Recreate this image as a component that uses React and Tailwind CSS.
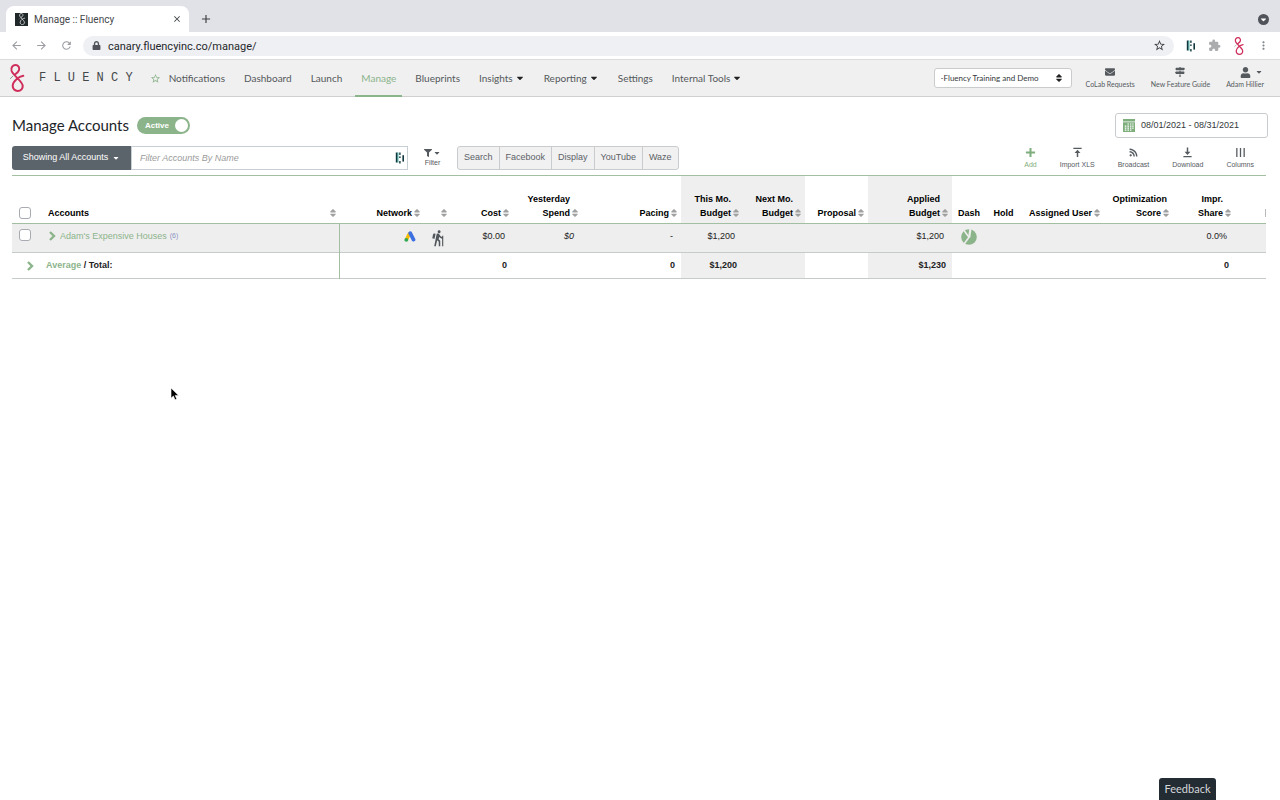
import React from 'react';
import clsx from 'clsx';
import { FaCaretDown, FaEnvelope, FaFilter, FaLock, FaMapSigns, FaRss, FaSort, FaUser } from 'react-icons/fa';
import {
  MdAdd,
  MdArrowBack,
  MdArrowForward,
  MdClose,
  MdExtension,
  MdHiking,
  MdMoreVert,
  MdRefresh,
  MdStarBorder,
} from 'react-icons/md';

const FluencyMark = ({ className, stroke = '#cf2e5b', width = 2 }) => (
  <svg viewBox="0 0 16 28" fill="none" stroke={stroke} strokeWidth={width} strokeLinecap="round" className={className} aria-hidden="true">
    <path d="M14.3 11.8C10 12.5 4 17 3.7 21.5C3.5 25 6 27 8.7 27C12 27 14 24.5 13.7 21.5C13 17 4 11 2.6 7C1.5 3.5 4 1 6.5 1C9.5 1 10.8 4 10 6.2C9.2 8.4 7.4 9.4 6 10.4" />
    <path d="M1.4 14.6L4 12" stroke="#8d9a8f" strokeWidth="1" />
  </svg>
);

const DataboxMark = ({ className }) => (
  <svg viewBox="0 0 10 12" className={className} aria-hidden="true">
    <g fill="#12383f">
      <rect x="0.8" y="0.5" width="1.8" height="10" />
      <rect x="4.2" y="0.5" width="1.4" height="2.4" />
      <rect x="4.2" y="4.4" width="1.4" height="1.6" />
      <rect x="4.2" y="9" width="1.4" height="2.5" />
      <rect x="7.4" y="3.2" width="1.6" height="6.4" />
    </g>
    <rect x="2.6" y="0.5" width="0.8" height="10" fill="#2fa79a" />
  </svg>
);

const GoogleAds = () => (
  <svg viewBox="0 0 24 22" className="inline-block w-3 h-[11px]" role="img" aria-label="Google Ads">
    <path d="M11.5 4L5 17" stroke="#fbbc04" strokeWidth="7" />
    <path d="M12.4 4.4L19 17.2" stroke="#3c6fe0" strokeWidth="7.5" strokeLinecap="round" />
    <circle cx="4.6" cy="17.6" r="3.8" fill="#34a853" />
  </svg>
);

const PieIcon = () => (
  <svg viewBox="0 0 16 16" className="inline-block size-4" role="img" aria-label="Dashboard">
    <circle cx="8" cy="8" r="7.8" fill="#8cb48b" />
    <path d="M3 1.6L8 8.2L3 15" stroke="#eeeeee" strokeWidth="1.6" fill="none" />
    <path d="M9.4 0L8.2 8.4" stroke="#eeeeee" strokeWidth="2.2" />
  </svg>
);

const Chevron = ({ className }) => (
  <svg viewBox="0 0 8 10" fill="none" stroke="#8cb48b" strokeWidth="2.4" className={clsx('h-[10px] w-2 shrink-0', className)} aria-hidden="true">
    <path d="M2 1L6 5L2 9" />
  </svg>
);

const CalendarIcon = () => (
  <svg viewBox="0 0 12 13" className="w-3 h-[13px]" aria-hidden="true">
    <path d="M0 0H12V2.4H0ZM0 3.2H12V13H0Z" fill="#7fae7d" />
    <path
      d="M4.4 5H6M7 5H8.4M9.2 5H10.6M1.8 7.2H3.4M4.4 7.2H6M7 7.2H8.4M9.2 7.2H10.6M1.8 9.2H3.4M4.4 9.2H6M7 9.2H8.4M9.2 9.2H10.6M1.8 11.2H3.4M4.4 11.2H6M7 11.2H8.4"
      stroke="#fff"
      strokeWidth="1.2"
    />
  </svg>
);

const icons = {
  add: <path d="M6 1V11M1 6H11" stroke="currentColor" strokeWidth="2.2" />,
  import: <path d="M1.5 1.5H10.5M6 11V5" stroke="currentColor" strokeWidth="1.6" />,
  download: <path d="M1.5 10.5H10.5M6 0.5V6" stroke="currentColor" strokeWidth="1.6" />,
  columns: <path d="M2 1V11M6 1V11M10 1V11" stroke="currentColor" strokeWidth="1.4" />,
};

const ActionIcon = ({ name }) => {
  if (name === 'broadcast') return <FaRss className="mt-px mb-[3px] size-[9px]" />;
  return (
    <svg viewBox="0 0 12 12" className="mb-[2px] size-[11px]" aria-hidden="true">
      {icons[name]}
      {name === 'import' && <path d="M6 3L9.2 6.6H2.8Z" fill="currentColor" />}
      {name === 'download' && <path d="M6 8.8L9.2 5.2H2.8Z" fill="currentColor" />}
    </svg>
  );
};

const navItems = [
  { label: 'Notifications', star: true },
  { label: 'Dashboard' },
  { label: 'Launch' },
  { label: 'Manage', active: true },
  { label: 'Blueprints' },
  { label: 'Insights', menu: true },
  { label: 'Reporting', menu: true },
  { label: 'Settings' },
  { label: 'Internal Tools', menu: true },
];

const actions = [
  { icon: 'add', label: 'Add', green: true },
  { icon: 'import', label: 'Import XLS' },
  { icon: 'broadcast', label: 'Broadcast' },
  { icon: 'download', label: 'Download' },
  { icon: 'columns', label: 'Columns' },
];

const columns = [
  { width: 'w-[85px]', label: 'Network', sort: true },
  { width: 'w-[27px]', label: '', sort: true },
  { width: 'w-[62px]', label: 'Cost', sort: true, value: '$0.00', total: '0' },
  { width: 'w-[69px]', top: 'Yesterday', label: 'Spend', sort: true, value: '$0', italic: true },
  { width: 'w-[99px]', label: 'Pacing', sort: true, value: '-', total: '0' },
  { width: 'w-[62px]', top: 'This Mo.', label: 'Budget', sort: true, shade: true, value: '$1,200', total: '$1,200' },
  { width: 'w-[62px]', top: 'Next Mo.', label: 'Budget', sort: true, shade: true },
  { width: 'w-[63px]', label: 'Proposal', sort: true },
  { width: 'w-[84px]', top: 'Applied', label: 'Budget', sort: true, shade: true, value: '$1,200', total: '$1,230' },
  { width: 'w-9', label: 'Dash' },
  { width: 'w-[33px]', label: 'Hold' },
  { width: 'w-[83px]', label: 'Assigned User', sort: true },
  { width: 'w-[69px]', top: 'Optimization', label: 'Score', sort: true },
  { width: 'w-[62px]', top: 'Impr.', label: 'Share', sort: true, value: '0.0%', total: '0' },
];

const SortIcon = () => <FaSort className="size-[10px] shrink-0 text-[#a0a0a0]" />;

const Checkbox = ({ label }) => (
  <input
    type="checkbox"
    aria-label={label}
    className="block mx-auto size-3 appearance-none rounded-[3px] border border-[#a9abb3] bg-white checked:bg-[#8cb48b]"
  />
);

const BrowserBar = () => (
  <div className="font-[Roboto,sans-serif]">
    <div className="flex h-8 items-end bg-[#e1e2e7] pl-[6px] pr-[11px]">
      <div className="flex h-[26px] w-[183px] items-center rounded-t-lg bg-white pl-[9px] pr-[7px]">
        <span className="flex size-[13px] items-center justify-center bg-[#20282a]">
          <FluencyMark className="h-3 w-2" stroke="#e8e8e8" width={1.8} />
        </span>
        <span className="ml-[6px] flex-1 text-[10px] text-[#45484c]">Manage :: Fluency</span>
        <button type="button" aria-label="Close tab">
          <MdClose className="size-[10px] text-[#3c4043]" />
        </button>
      </div>
      <button type="button" aria-label="New tab" className="mb-[6px] ml-[10px]">
        <MdAdd className="size-[14px] text-[#3c4043]" />
      </button>
      <button type="button" aria-label="Search tabs" className="mb-[7px] ml-auto flex size-[11px] items-center justify-center rounded-full bg-[#505359]">
        <FaCaretDown className="size-[9px] text-white" />
      </button>
    </div>
    <div className="flex h-7 items-center border-b border-[#dadbdd] bg-white pl-[10px] pr-[10px]">
      <div className="flex items-center gap-3 text-[#9a9da1]">
        <button type="button" aria-label="Back"><MdArrowBack className="size-[13px]" /></button>
        <button type="button" aria-label="Forward"><MdArrowForward className="size-[13px]" /></button>
        <button type="button" aria-label="Reload"><MdRefresh className="size-[13px]" /></button>
      </div>
      <div className="ml-[10px] flex h-5 flex-1 items-center rounded-full bg-[#eff0f4] pl-[9px] pr-2">
        <FaLock className="size-[9px] text-[#505359]" />
        <input
          aria-label="Address"
          defaultValue="canary.fluencyinc.co/manage/"
          className="ml-[7px] h-5 min-w-0 flex-1 bg-transparent pt-[2px] text-[11px] text-[#25282b] outline-none"
        />
        <MdStarBorder className="size-[13px] text-[#3c4043]" />
      </div>
      <div className="ml-3 flex items-center gap-3">
        <DataboxMark className="h-3 w-[10px]" />
        <MdExtension className="size-[13px] text-[#aaacae]" />
        <FluencyMark className="h-[18px] w-3" />
        <MdMoreVert className="size-[13px] text-[#83868a]" />
      </div>
    </div>
  </div>
);

const HeaderLink = ({ icon, label }) => (
  <a href="#" className="flex flex-col items-center text-[7px] leading-3 text-[#555a5f]">
    <span className="flex h-3 items-center gap-1">{icon}</span>
    <span className="whitespace-nowrap">{label}</span>
  </a>
);

const AppHeader = () => (
  <header className="flex h-[37px] items-center border-b border-[#cfcfcf] bg-[#f0f0f0] pl-[9px] pr-4 font-[Lato,sans-serif]">
    <a href="#" className="flex items-center">
      <FluencyMark className="h-7 w-4" />
      <span className="ml-[14px] whitespace-pre font-['Liberation_Mono',monospace] text-[12px] text-[#44484b]">F L U E N C Y</span>
    </a>
    <nav className="ml-[17px] flex h-full items-stretch gap-[19px] text-[10px] text-[#54585b]">
      {navItems.map((item) => (
        <a
          key={item.label}
          href="#"
          className={clsx('relative flex items-center whitespace-nowrap', item.active && 'text-[#8cb48b]')}
        >
          {item.star && <MdStarBorder className="mr-2 size-[11px] text-[#8cb48b]" />}
          {item.label}
          {item.menu && <FaCaretDown className="ml-[2px] size-[10px] text-[#222]" />}
          {item.active && <span className="absolute -inset-x-[6px] -bottom-px h-[2px] bg-[#8cb48b]" />}
        </a>
      ))}
    </nav>
    <div className="relative ml-auto">
      <select
        aria-label="Company"
        className="block h-5 w-[138px] appearance-none rounded-[3px] border border-[#c9cbcd] bg-white pl-[6px] text-[8px] text-[#33373a]"
      >
        <option>-Fluency Training and Demo</option>
      </select>
      <FaSort className="pointer-events-none absolute right-2 top-[5px] size-[10px] text-[#222]" />
    </div>
    <div className="ml-[14px] flex gap-4">
      <HeaderLink label="CoLab Requests" icon={<FaEnvelope className="size-[10px]" />} />
      <HeaderLink label="New Feature Guide" icon={<FaMapSigns className="size-[10px]" />} />
      <HeaderLink
        label="Adam Hillier"
        icon={
          <>
            <FaUser className="ml-3 size-[11px]" />
            <FaCaretDown className="size-2" />
          </>
        }
      />
    </div>
  </header>
);

const Toolbar = () => (
  <div className="flex items-center">
    <button type="button" className="flex h-6 w-[119px] items-center justify-center gap-1 rounded-l-[3px] bg-[#5c646b] text-[9px] text-white">
      Showing All Accounts
      <FaCaretDown className="size-2" />
    </button>
    <div className="relative w-[277px]">
      <input
        type="text"
        aria-label="Filter accounts by name"
        placeholder="Filter Accounts By Name"
        className="block h-6 w-full border border-[#c8cfd2] px-2 text-[9px] outline-none placeholder:italic placeholder:text-[#9b9b9b]"
      />
      <DataboxMark className="absolute right-[3px] top-[6px] h-3 w-[10px]" />
    </div>
    <button type="button" className="ml-4 flex flex-col items-center text-[7px] leading-[10px] text-[#555a5f]">
      <span className="flex h-[10px] items-center gap-px">
        <FaFilter className="size-2" />
        <FaCaretDown className="size-2" />
      </span>
      Filter
    </button>
    <div className="ml-4 flex h-6 divide-x divide-[#c9cccf] overflow-hidden rounded-[3px] border border-[#c9cccf] bg-[#f1f1f2] text-[9px] text-[#5c6166]">
      {['Search', 'Facebook', 'Display', 'YouTube', 'Waze'].map((name) => (
        <button key={name} type="button" className="px-[6px]">
          {name}
        </button>
      ))}
    </div>
    <div className="ml-auto mr-3 flex gap-[23px]">
      {actions.map((action) => (
        <button
          key={action.label}
          type="button"
          className={clsx('flex flex-col items-center text-[7px] leading-[10px]', action.green ? 'text-[#7fae7d]' : 'text-[#555a5f]')}
        >
          <ActionIcon name={action.icon} />
          {action.label}
        </button>
      ))}
    </div>
  </div>
);

const AccountsTable = () => (
  <table className="mt-[5px] w-full table-fixed border-y border-t-[#a3bfa2] border-b-[#c5cbc6] text-[9px] text-[#222]">
    <thead>
      <tr className="h-12 border-b border-[#a3bfa2] align-bottom text-black">
        <th className="w-[26px] pb-1">
          <Checkbox label="Select all accounts" />
        </th>
        <th className="pb-[3px] pl-[10px] pr-px">
          <div className="flex items-center justify-between leading-[14px]">
            Accounts
            <SortIcon />
          </div>
        </th>
        {columns.map((col, i) => (
          <th key={i} className={clsx('pb-[3px] pr-[2px] leading-[14px]', col.width, col.shade && 'bg-[#efefef]')}>
            <div className={clsx('flex flex-col whitespace-nowrap', col.sort ? 'items-end' : 'items-center')}>
              {col.top && <span className={col.top === 'Optimization' ? 'pr-1' : 'pr-[10px]'}>{col.top}</span>}
              <span className="flex h-[14px] items-center">
                {col.label}
                {col.sort && <SortIcon />}
              </span>
            </div>
          </th>
        ))}
        <th className="w-[31px] pb-[6px]">
          <span className="ml-auto block h-2 w-px bg-[#bbb]" />
        </th>
      </tr>
    </thead>
    <tbody>
      <tr className="h-[29px] border-b border-[#c5cbc6] bg-[#eeeeee] align-top">
        <td className="pt-[5px]">
          <Checkbox label="Select Adam's Expensive Houses" />
        </td>
        <td className="border-r border-[#a3bfa2] pl-[10px] pt-[5px]">
          <a href="#" className="flex items-center leading-[14px] text-[#8cb48b]">
            <Chevron className="mr-1" />
            Adam's Expensive Houses
            <span className="ml-[3px] text-[7px] text-[#8a93c4]">(6)</span>
          </a>
        </td>
        {columns.map((col, i) => (
          <td
            key={i}
            className={clsx(
              'pt-[5px] leading-[14px]',
              col.label === 'Dash' ? 'pr-[2px] text-center' : 'pr-2 text-right',
              col.italic && 'italic'
            )}
          >
            {col.label === 'Network' && <GoogleAds />}
            {i === 1 && <MdHiking className="ml-auto -mr-1 size-[18px] text-[#50565b]" />}
            {col.label === 'Dash' && <PieIcon />}
            {col.value}
          </td>
        ))}
        <td />
      </tr>
      <tr className="h-[26px] font-bold">
        <td>
          <Chevron className="ml-[14px]" />
        </td>
        <td className="border-r border-[#a3bfa2] pl-2">
          <a href="#" className="text-[#8cb48b]">Average</a> / Total:
        </td>
        {columns.map((col, i) => (
          <td key={i} className={clsx('pr-[6px] text-right', col.shade && 'bg-[#efefef]')}>
            {col.total}
          </td>
        ))}
        <td />
      </tr>
    </tbody>
  </table>
);

export default function App() {
  return (
    <div className="min-h-screen bg-white font-['Liberation_Sans',Arial,sans-serif]">
      <BrowserBar />
      <AppHeader />
      <main className="pt-4">
        <div className="flex h-[25px] items-center px-3">
          <h1 className="font-[Lato,sans-serif] text-[15px] text-[#212529]">Manage Accounts</h1>
          <label className="ml-2 flex h-[17px] w-[53px] items-center justify-between rounded-full bg-[#8cb48b] pl-2 pr-[2px] text-[8px] font-bold text-white">
            <input type="checkbox" role="switch" defaultChecked className="sr-only" />
            Active
            <span className="size-[13px] rounded-full bg-white" />
          </label>
          <button type="button" className="ml-auto flex h-[25px] w-[153px] items-center gap-[6px] rounded-[3px] border border-[#c9cccf] bg-white pl-[7px] text-[9px] text-[#33373a]">
            <CalendarIcon />
            08/01/2021 - 08/31/2021
          </button>
        </div>
        <div className="mt-2 pl-3 pr-[14px]">
          <Toolbar />
          <AccountsTable />
        </div>
      </main>
      <svg viewBox="0 0 10 14" className="pointer-events-none absolute left-[170px] top-[387px] h-[14px] w-[10px]" aria-hidden="true">
        <path d="M1 1V11.2L3.4 9L5 12.8L6.8 12L5.2 8.4H8.6Z" fill="#000" stroke="#fff" strokeWidth="0.6" />
      </svg>
      <button type="button" className="fixed bottom-0 right-16 h-[22px] w-[57px] rounded-t-[3px] bg-[#232b33] font-[Lato,sans-serif] text-[11px] text-[#d5d8da]">
        Feedback
      </button>
    </div>
  );
}
